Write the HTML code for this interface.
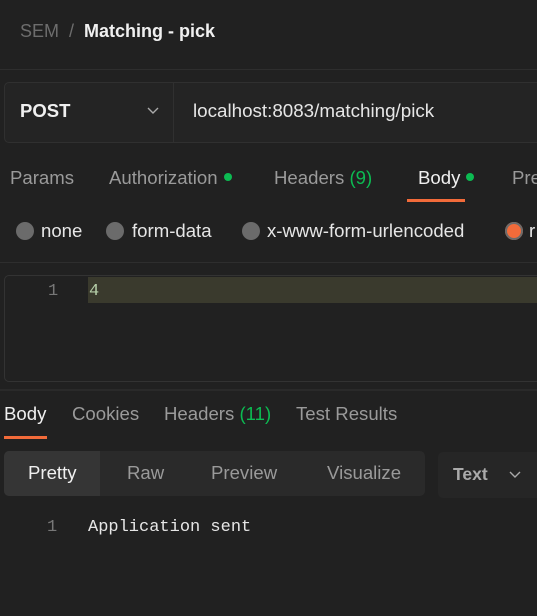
<!DOCTYPE html>
<html><head><style>
body{margin:0;width:537px;height:616px;background:#212121;overflow:hidden;font-family:"Liberation Sans",sans-serif;position:relative;color:#aaa}
.a{position:absolute;white-space:nowrap}
.hl{position:absolute;height:1px;background:#2e2e2e;left:0;width:537px}
.dot{display:inline-block;width:8px;height:8px;border-radius:50%;background:#0cbb52;margin-left:6px;vertical-align:middle;position:relative;top:-2px}
.rad{position:absolute;width:18px;height:18px;border-radius:50%;background:#6b6b6b}
.mono{font-family:"Liberation Mono","DejaVu Sans Mono",monospace}
.t{font-size:18.6px}
</style></head><body>
<div class="a" style="left:20px;top:21px;font-size:18px;color:#6d6d6d">SEM&nbsp; /&nbsp; <b style="color:#f0f0f0">Matching - pick</b></div>
<div class="hl" style="top:69px"></div>
<div class="a" style="left:4px;top:82px;width:540px;height:59px;border:1px solid #303030;border-radius:5px;background:#242424"></div>
<div class="a" style="left:173px;top:83px;width:1px;height:59px;background:#303030"></div>
<div class="a" style="left:20px;top:100px;font-size:18.5px;font-weight:bold;color:#f0f0f0">POST</div>
<svg class="a" style="left:146px;top:106px" width="14" height="10"><path d="M2 2l5 5 5-5" stroke="#aaa" stroke-width="1.4" fill="none"/></svg>
<div class="a" style="left:193px;top:100px;font-size:18.8px;color:#e6e6e6">localhost:8083/matching/pick</div>
<div class="a t" style="left:10px;top:167px;color:#9a9a9a">Params</div>
<div class="a t" style="left:109px;top:167px;color:#9a9a9a">Authorization<span class="dot"></span></div>
<div class="a t" style="left:274px;top:167px;color:#9a9a9a">Headers <span style="color:#0cbb52">(9)</span></div>
<div class="a t" style="left:418px;top:167px;color:#f0f0f0">Body<span class="dot"></span></div>
<div class="a t" style="left:512px;top:167px;color:#9a9a9a">Pre</div>
<div class="a" style="left:407px;top:199px;width:58px;height:3px;background:#f26b3a"></div>
<div class="rad" style="left:16px;top:222px"></div><div class="a t" style="left:41px;top:220px;color:#e6e6e6">none</div>
<div class="rad" style="left:106px;top:222px"></div><div class="a t" style="left:132px;top:220px;color:#e6e6e6">form-data</div>
<div class="rad" style="left:242px;top:222px"></div><div class="a t" style="left:267px;top:220px;color:#e6e6e6">x-www-form-urlencoded</div>
<div class="rad" style="left:505px;top:222px;background:#f26b3a;box-shadow:0 0 0 2px #6b6b6b inset"></div><div class="a t" style="left:529px;top:220px;color:#e6e6e6">r</div>
<div class="hl" style="top:262px"></div>
<div class="a" style="left:4px;top:275px;width:540px;height:105px;border:1px solid #333;border-radius:5px"></div>
<div class="a" style="left:88px;top:277px;width:449px;height:26px;background:#3a3a2d"></div>
<div class="a mono" style="left:48px;top:282px;font-size:17px;color:#777">1</div>
<div class="a mono" style="left:89px;top:282px;font-size:17px;color:#b5cea8">4</div>
<div class="hl" style="top:389px;height:2px;background:#2a2a2a"></div>
<div class="a t" style="left:4px;top:403px;color:#f0f0f0">Body</div>
<div class="a t" style="left:72px;top:403px;color:#9a9a9a">Cookies</div>
<div class="a t" style="left:164px;top:403px;color:#9a9a9a">Headers <span style="color:#0cbb52">(11)</span></div>
<div class="a t" style="left:296px;top:403px;color:#9a9a9a">Test Results</div>
<div class="a" style="left:4px;top:436px;width:43px;height:3px;background:#f26b3a"></div>
<div class="a" style="left:4px;top:451px;width:421px;height:45px;background:#2a2a2a;border-radius:5px"></div>
<div class="a" style="left:4px;top:451px;width:96px;height:45px;background:#353535;border-radius:5px 0 0 5px"></div>
<div class="a t" style="left:28px;top:462px;color:#f0f0f0">Pretty</div>
<div class="a t" style="left:127px;top:462px;color:#9a9a9a">Raw</div>
<div class="a t" style="left:211px;top:462px;color:#9a9a9a">Preview</div>
<div class="a t" style="left:327px;top:462px;color:#9a9a9a">Visualize</div>
<div class="a" style="left:438px;top:452px;width:130px;height:46px;background:#262626;border-radius:5px"></div>
<div class="a" style="left:453px;top:464px;font-size:17.5px;font-weight:bold;color:#aaa">Text</div>
<svg class="a" style="left:508px;top:470px" width="14" height="10"><path d="M2 2l5 5 5-5" stroke="#aaa" stroke-width="1.4" fill="none"/></svg>
<div class="a mono" style="left:47px;top:518px;font-size:17px;color:#777">1</div>
<div class="a mono" style="left:88px;top:518px;font-size:17px;color:#e6e6e6">Application sent</div>
</body></html>
